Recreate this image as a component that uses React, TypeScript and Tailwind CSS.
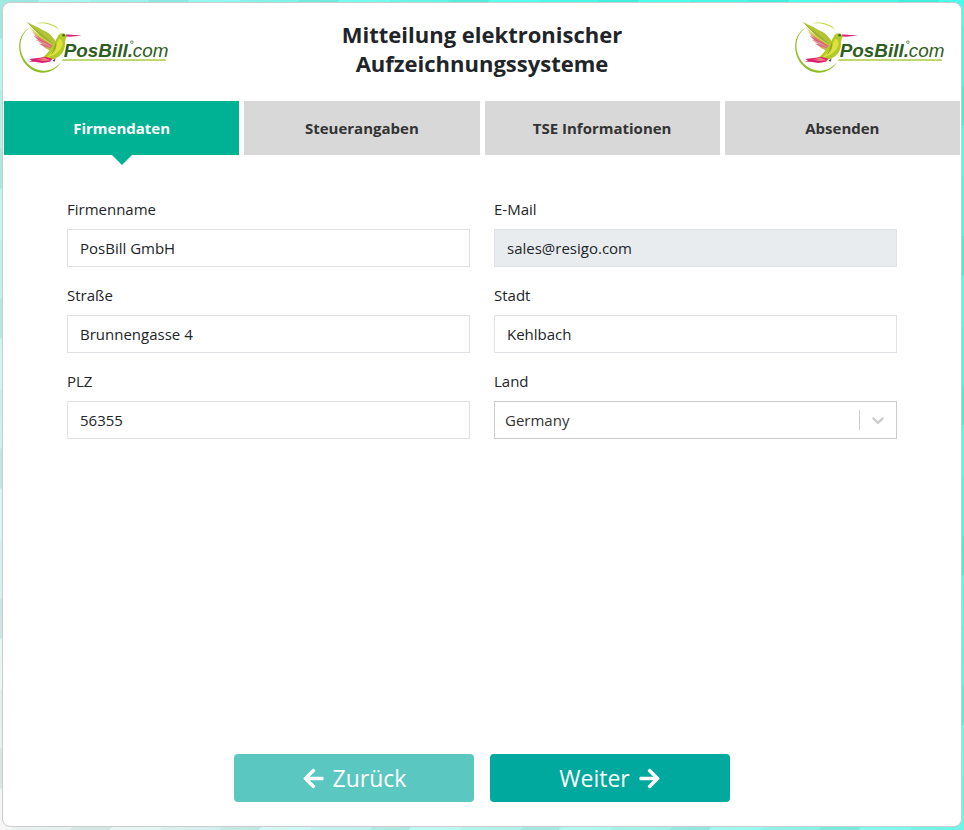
import { ReactNode, useState } from "react";
import { FaArrowLeft, FaArrowRight } from "react-icons/fa";

const STEPS = ["Firmendaten", "Steuerangaben", "TSE Informationen", "Absenden"];

function Logo() {
  return (
    <svg
      viewBox="57 62 453 164"
      className="w-[150px] shrink-0"
      role="img"
      aria-label="PosBill.com"
    >
      {/* ring */}
      <path
        d="M89 85C64 101 55 125 58 151C62 188 91 220 128 221C152 221 173 209 184 188C171 206 151 216 130 215C95 213 68 187 62 151C59 125 67 102 89 85Z"
        fill="#8fbf22"
      />
      <path
        d="M106 73C127 66 153 70 173 85L178 91C155 74 130 70 106 73Z"
        fill="#bcd531"
      />
      {/* wing feathers, fanned out from the shoulder */}
      <path
        d="M80 67C100 78 124 88 142 99C156 108 164 119 169 130L160 142C140 128 112 100 80 67Z"
        fill="#b3c534"
      />
      <path d="M80 67C110 92 138 112 160 134L154 137C128 118 104 94 80 67Z" fill="#9ab52e" />
      <path d="M88 82C110 104 136 120 162 138L154 141C128 126 104 106 88 82Z" fill="#d5cf4b" />
      <path d="M95 96C114 112 136 124 160 140L153 144C130 130 110 116 95 96Z" fill="#d98a5c" />
      <path d="M100 108C118 118 138 128 160 142L152 146C132 136 114 124 100 108Z" fill="#d8607a" />
      <path d="M107 121C122 124 140 132 158 144L150 149C136 138 122 132 107 121Z" fill="#e08c8c" />
      <path d="M117 133C130 134 142 139 156 146L149 152C140 145 130 142 117 133Z" fill="#d96a7c" />
      <path d="M132 144C140 143 148 146 156 149L150 155C144 150 140 148 132 144Z" fill="#c9b645" />
      {/* body */}
      <path
        d="M174 112C179 101 192 99 199 107L202 112C195 119 197 130 195 143C192 161 180 173 164 180L132 183L120 180C136 172 145 160 152 149C161 140 166 124 174 112Z"
        fill="#b2ca28"
      />
      <path
        d="M179 119C190 120 191 136 183 149C175 162 156 172 136 178C151 166 162 152 168 138Z"
        fill="#dfe23c"
      />
      <path d="M168 130C173 138 169 155 152 168C162 153 162 142 168 130Z" fill="#93ac20" />
      <circle cx="192" cy="108" r="4" fill="#4b6a16" />
      <path
        d="M199 106C214 105 229 108 246 109C229 112 214 113 200 112Z"
        fill="#d5247b"
      />
      {/* tail */}
      <path
        d="M139 174L112 177L88 180L96 184L86 187L109 189L127 192L151 188L158 179Z"
        fill="#db1f72"
      />
      <path d="M133 176L107 181L132 181L117 186L154 184Z" fill="#f0867a" />
      <path d="M158 184L168 178L164 188Z" fill="#553a3e" />
      {/* wordmark */}
      <path d="M190 180H501V186H186Z" fill="#c1d870" />
      <text
        x="192"
        y="173"
        fontSize="57"
        fill="#2e5d1e"
        className="font-['Liberation_Sans',sans-serif] italic"
      >
        <tspan className="font-bold">PosBill.</tspan>
        <tspan>com</tspan>
      </text>
      {/* registered mark */}
      <circle cx="398" cy="129" r="4" fill="none" stroke="#2e5d1e" strokeWidth="2" />
    </svg>
  );
}

interface FieldProps {
  id: string;
  label: string;
  children: ReactNode;
}

function Field({ id, label, children }: FieldProps) {
  return (
    <div>
      <label htmlFor={id} className="mb-2 block leading-6">
        {label}
      </label>
      {children}
    </div>
  );
}

interface TextFieldProps {
  id: string;
  label: string;
  value: string;
  disabled?: boolean;
}

function TextField({ id, label, value, disabled = false }: TextFieldProps) {
  return (
    <Field id={id} label={label}>
      <input
        id={id}
        type="text"
        defaultValue={value}
        disabled={disabled}
        className="h-[38px] w-full border border-[#dee2e6] bg-white px-3 focus:border-[#00b294] focus:outline-none disabled:bg-[#e9ecef]"
      />
    </Field>
  );
}

export default function App() {
  const [step, setStep] = useState(0);

  return (
    <div className="flex min-h-screen flex-col bg-[repeating-linear-gradient(135deg,rgba(0,90,80,0.1)_0_28px,transparent_28px_64px,rgba(0,90,80,0.04)_64px_106px),linear-gradient(55deg,#f6f6f6,#a4f8f0_45%,#48ffec_75%)] px-0.5 pt-0.5 pb-[3px] font-['Open_Sans','Noto_Sans',sans-serif] text-[15px] text-[#212529]">
      <main className="flex grow flex-col rounded-lg border border-[#ccc] bg-white">
        <header className="flex items-start justify-between px-4 pt-[17px] pb-[23px]">
          <Logo />
          <h1 className="max-w-[340px] text-center text-[22px] leading-[29px] font-bold">
            Mitteilung elektronischer Aufzeichnungssysteme
          </h1>
          <Logo />
        </header>

        <nav className="grid grid-cols-4 gap-[5px] px-px">
          {STEPS.map((name, index) => (
            <button
              key={name}
              type="button"
              onClick={() => setStep(index)}
              className={`relative h-[54px] font-bold ${
                index === step
                  ? "bg-[#00b294] text-white"
                  : "bg-[#d8d8d8] text-[#333]"
              }`}
            >
              {name}
              {index === step && (
                <span className="absolute top-full left-1/2 -translate-x-1/2 border-x-10 border-t-10 border-x-transparent border-t-[#00b294]" />
              )}
            </button>
          ))}
        </nav>

        <form className="flex grow flex-col" onSubmit={(e) => e.preventDefault()}>
          <div className="grid grid-cols-2 gap-x-6 gap-y-4 px-16 pt-[42px]">
            <TextField id="company" label="Firmenname" value="PosBill GmbH" />
            <TextField id="email" label="E-Mail" value="sales@resigo.com" disabled />
            <TextField id="street" label="Straße" value="Brunnengasse 4" />
            <TextField id="city" label="Stadt" value="Kehlbach" />
            <TextField id="zip" label="PLZ" value="56355" />
            <Field id="country" label="Land">
              <div className="relative">
                <select
                  id="country"
                  className="h-[38px] w-full appearance-none border border-[#ccc] bg-white px-2.5 text-[#333]"
                >
                  <option>Germany</option>
                </select>
                <span className="pointer-events-none absolute inset-y-0 right-0 my-[9px] mr-px flex items-center border-l border-[#ccc] px-2 text-[#ccc]">
                  <svg viewBox="0 0 20 20" className="size-5" fill="currentColor">
                    <path d="M4.516 7.548c0.436-0.446 1.043-0.481 1.576 0l3.908 3.747 3.908-3.747c0.533-0.481 1.141-0.446 1.574 0 0.436 0.445 0.408 1.197 0 1.615-0.406 0.418-4.695 4.502-4.695 4.502-0.217 0.223-0.502 0.335-0.787 0.335s-0.57-0.112-0.789-0.335c0 0-4.287-4.084-4.695-4.502s-0.436-1.17 0-1.615z" />
                  </svg>
                </span>
              </div>
            </Field>
          </div>

          <div className="mt-auto flex justify-center gap-4 pb-6 text-[23px] text-white">
            <button
              type="button"
              disabled={step === 0}
              onClick={() => setStep(step - 1)}
              className="flex h-12 w-60 items-center justify-center gap-2 rounded bg-[#00a99d] disabled:bg-[#5ac8c1]"
            >
              <FaArrowLeft />
              Zurück
            </button>
            <button
              type="button"
              onClick={() => setStep(Math.min(step + 1, STEPS.length - 1))}
              className="flex h-12 w-60 items-center justify-center gap-2 rounded bg-[#00a99d]"
            >
              Weiter
              <FaArrowRight />
            </button>
          </div>
        </form>
      </main>
    </div>
  );
}
